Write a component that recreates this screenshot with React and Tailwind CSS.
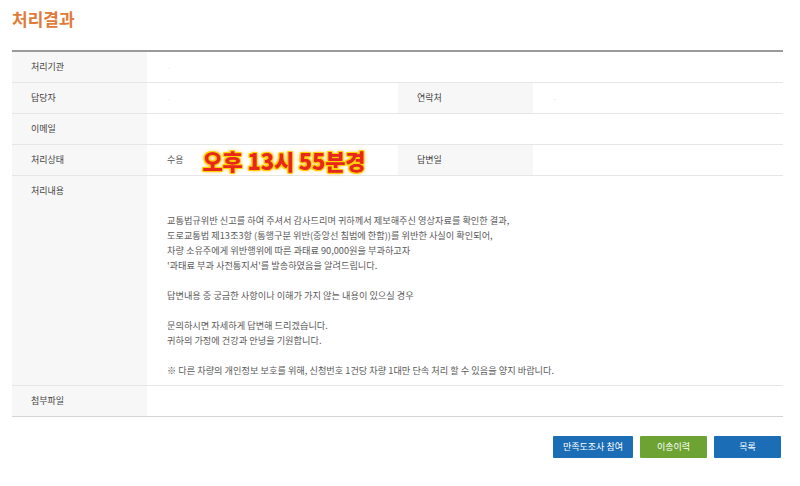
import React from "react";

const font = { fontFamily: '"Noto Sans CJK KR", "Noto Sans", sans-serif' };

function Label({ children, className = "" }) {
  return (
    <div className={"bg-[#f7f7f7] pl-[19px] text-[9px] text-[#444] flex items-center " + className}>
      {children}
    </div>
  );
}

export default function App() {
  const lines = [
    "",
    "",
    "교통법규위반 신고를 하여 주셔서 감사드리며 귀하께서 제보해주신 영상자료를 확인한 결과,",
    "도로교통법 제13조3항 (통행구분 위반(중앙선 침범에 한함))를 위반한 사실이 확인되어,",
    "차량 소유주에게 위반행위에 따른 과태료 90,000원을 부과하고자",
    "'과태료 부과 사전통지서'를 발송하였음을 알려드립니다.",
    "",
    "답변내용 중 궁금한 사항이나 이해가 가지 않는 내용이 있으실 경우",
    "",
    "문의하시면 자세하게 답변해 드리겠습니다.",
    "귀하의 가정에 건강과 안녕을 기원합니다.",
    "",
    "※ 다른 차량의 개인정보 보호를 위해, 신청번호 1건당 차량 1대만 단속 처리 할 수 있음을 양지 바랍니다.",
  ];
  return (
    <div style={font} className="w-[800px] h-[486px] bg-white px-3 pt-[6px]">
      <h1 className="text-[17px] font-bold text-[#df7b39] leading-[25px]">처리결과</h1>
      <div className="mt-[19px] w-[771px] border-t-2 border-[#9a9a9a]">
        <div className="grid grid-cols-[135px_1fr] h-[31px] border-b border-[#e6e6e6]">
          <Label>처리기관</Label>
          <div className="pl-5 flex items-center text-[8.5px] text-[#ececec]">-</div>
        </div>
        <div className="grid grid-cols-[135px_251px_135px_1fr] h-[31px] border-b border-[#e6e6e6]">
          <Label>답당자</Label>
          <div className="pl-5 flex items-center text-[8.5px] text-[#ececec]">-</div>
          <Label>연락처</Label>
          <div className="pl-5 flex items-center text-[8.5px] text-[#ececec]">-</div>
        </div>
        <div className="grid grid-cols-[135px_1fr] h-[31px] border-b border-[#e6e6e6]">
          <Label>이메일</Label>
          <div />
        </div>
        <div className="grid grid-cols-[135px_251px_135px_1fr] h-[31px] border-b border-[#e6e6e6]">
          <Label>처리상태</Label>
          <div className="pl-5 flex items-center gap-[19px]">
            <span className="text-[9px] text-[#555]">수용</span>
            <span className="text-[22px] font-black text-[#e8261c] leading-none tracking-[-0.2px] [text-shadow:1px_1px_0_#ffd200,-1px_-1px_0_#ffd200,1px_-1px_0_#ffd200,-1px_1px_0_#ffd200,0_1px_0_#ffd200,0_-1px_0_#ffd200,0_0_4px_#ffa000]">
              오후 13시 55분경
            </span>
          </div>
          <Label>답변일</Label>
          <div />
        </div>
        <div className="grid grid-cols-[135px_1fr] border-b border-[#e6e6e6]">
          <div className="bg-[#f7f7f7] pl-[19px] py-[7px] text-[9px] leading-[15px] text-[#444]">처리내용</div>
          <div className="pl-5 py-[7px] text-[9.2px] leading-[15px] text-[#5a5a5a]">
            {lines.map((l, i) => (
              <div key={i} className="h-[15px] whitespace-nowrap">{l}</div>
            ))}
          </div>
        </div>
        <div className="grid grid-cols-[135px_1fr] h-[31px] border-b border-[#d4d4d4]">
          <Label>첨부파일</Label>
          <div />
        </div>
      </div>
      <div className="mt-[19px] w-[769px] flex justify-end gap-[7px]">
        <button className="w-[80px] h-[22px] bg-[#1b6db5] text-white text-[9px] rounded-[1px]">만족도조사 참여</button>
        <button className="w-[67px] h-[22px] bg-[#6ca332] text-white text-[9px] rounded-[1px]">이송이력</button>
        <button className="w-[67px] h-[22px] bg-[#1b6db5] text-white text-[9px] rounded-[1px]">목록</button>
      </div>
    </div>
  );
}
